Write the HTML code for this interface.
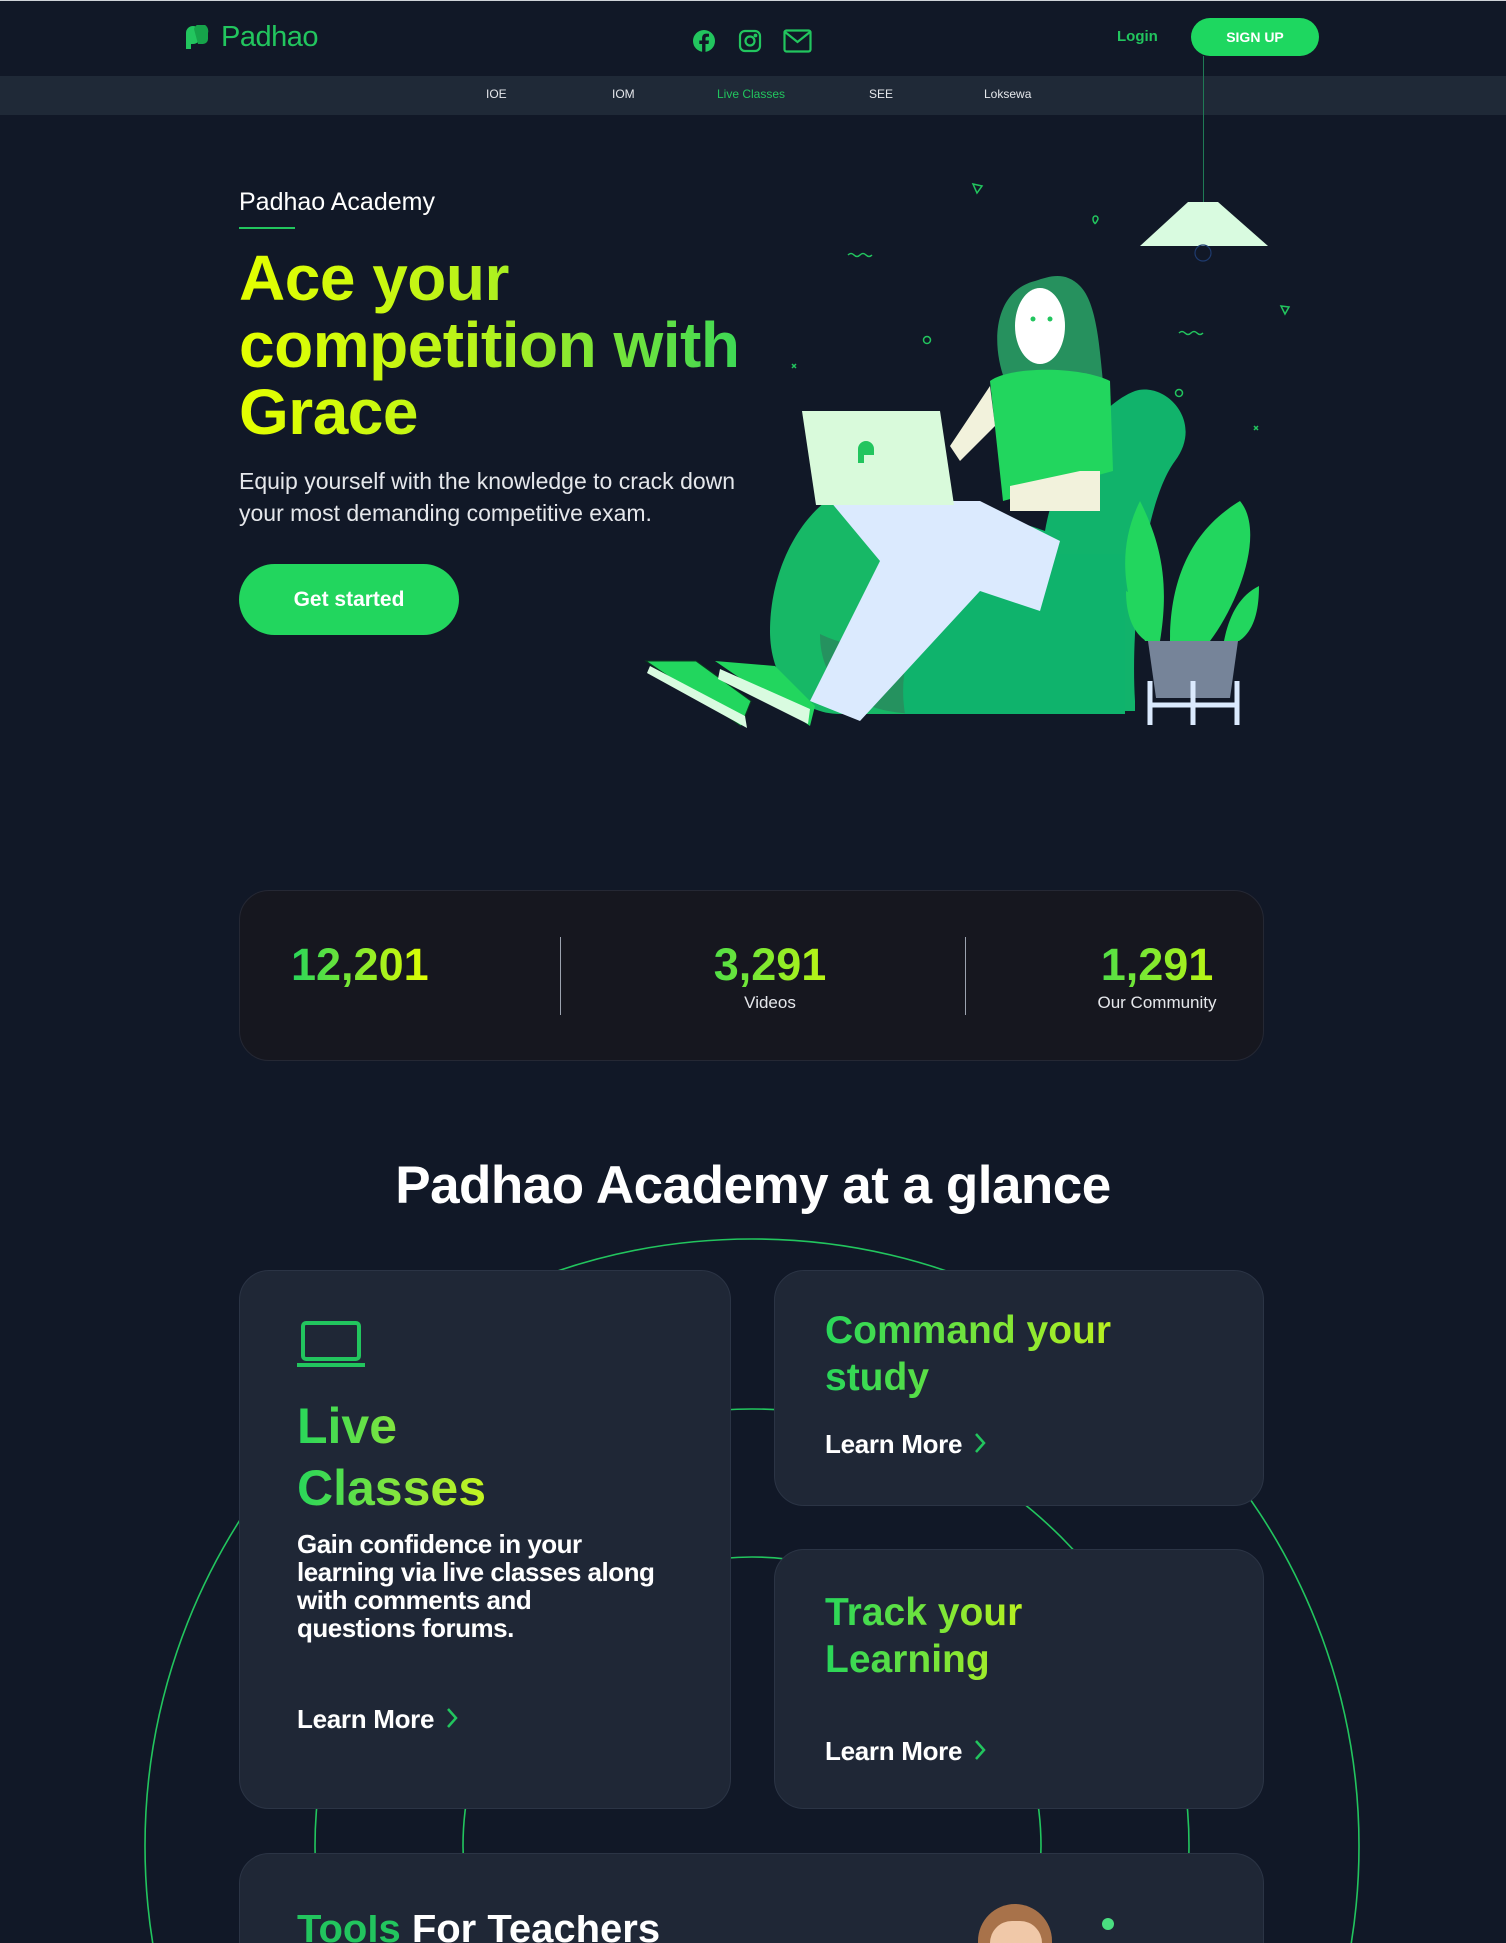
<!DOCTYPE html>
<html><head><meta charset="utf-8">
<style>
*{margin:0;padding:0;box-sizing:border-box}
body{width:1506px;height:1942px;background:#111827;font-family:"Liberation Sans",sans-serif;position:relative;overflow:hidden;border-top:1px solid #cfd3d8}
.abs{position:absolute}
.grad{background-image:linear-gradient(90deg,#28d65a,#e4ff00);-webkit-background-clip:text;background-clip:text;color:transparent}
.g2{background-image:linear-gradient(90deg,#28d65a,#b8f020)}
.card{position:absolute;background:#1f2736;border:1px solid #2b3445;border-radius:30px}
.lm{position:absolute;color:#fff;font-weight:700;font-size:26px;letter-spacing:-0.3px;white-space:nowrap}
.lm svg{margin-left:12px;vertical-align:-1px}
.nav a{position:absolute;top:86px;font-size:12px;color:#e5e7eb}
</style></head><body>
<!-- header -->
<svg class="abs" style="left:184px;top:24px" width="28" height="28" viewBox="0 0 28 28"><path d="M2 24V8a7 7 0 0 1 14 0v4a7 7 0 0 1-7 7H7v5z" fill="#22c55e"/><path d="M10 4a7 7 0 0 1 14 4v6a5 5 0 0 1-5 5h-5" fill="#16a34a"/></svg>
<div class="abs" style="left:221px;top:20px;font-size:29px;color:#22c55e;letter-spacing:-0.5px">Padhao</div>
<svg class="abs" style="left:692px;top:28px" width="24" height="24" viewBox="0 0 24 24"><circle cx="12" cy="12" r="11" fill="#22c55e"/><path d="M13.5 23v-8h3l.5-3.5h-3.5V9.5c0-1 .4-1.7 1.8-1.7H17V4.8a20 20 0 0 0-2.6-.2c-2.6 0-4.3 1.6-4.3 4.5v2.4H7.3V15h2.8v8z" fill="#111827"/></svg>
<svg class="abs" style="left:738px;top:28px" width="24" height="24" viewBox="0 0 24 24" fill="none" stroke="#22c55e" stroke-width="2.2"><rect x="2" y="2" width="20" height="20" rx="5"/><circle cx="12" cy="12" r="4.5"/><circle cx="17.5" cy="6.5" r="0.8" fill="#22c55e"/></svg>
<svg class="abs" style="left:783px;top:28px" width="29" height="24" viewBox="0 0 29 24" fill="none" stroke="#22c55e" stroke-width="2.2"><rect x="1.5" y="1.5" width="26" height="21" rx="2"/><path d="M2 3l12.5 10L27 3"/></svg>
<div class="abs" style="left:1117px;top:27px;font-size:15px;font-weight:700;color:#22c55e">Login</div>
<div class="abs" style="left:1191px;top:17px;width:128px;height:38px;border-radius:19px;background:#1ed760;color:#fff;font-size:14px;font-weight:700;text-align:center;line-height:38px">SIGN UP</div>
<div class="abs" style="left:0;top:75px;width:1506px;height:39px;background:#1f2937"></div>
<div class="nav"><a style="left:486px">IOE</a><a style="left:612px">IOM</a><a style="left:717px;color:#22c55e">Live Classes</a><a style="left:869px">SEE</a><a style="left:984px">Loksewa</a></div>
<div class="abs" style="left:1203px;top:55px;width:1px;height:150px;background:#1f7a55"></div>
<!-- hero -->
<div class="abs" style="left:239px;top:187px;font-size:25px;color:#fff">Padhao Academy</div>
<div class="abs" style="left:239px;top:226px;width:56px;height:2px;background:#22c55e"></div>
<div class="abs" style="left:239px;top:244px;font-size:64px;font-weight:700;line-height:67px;letter-spacing:-0.5px;width:580px;background-image:linear-gradient(90deg,#e4ff00 0%,#b9f31a 40%,#33d65a 90%);-webkit-background-clip:text;background-clip:text;color:transparent">Ace your<br>competition with<br>Grace</div>
<div class="abs" style="left:239px;top:464px;font-size:23px;line-height:32px;color:#e5e7eb">Equip yourself with the knowledge to crack down<br>your most demanding competitive exam.</div>
<div class="abs" style="left:239px;top:563px;width:220px;height:71px;border-radius:36px;background:#22d65e;color:#fff;font-size:21px;font-weight:700;text-align:center;line-height:71px">Get started</div>
<!-- illustration -->
<svg class="abs" style="left:0;top:0" width="1506" height="760">
<g fill="none" stroke="#22c55e" stroke-width="1.5">
<path d="M973 183l9 2-5 7z"/><path d="M1281 305l8 1-4 7z"/><circle cx="927" cy="339" r="3.5"/><circle cx="1179" cy="392" r="3.5"/>
<path d="M848 254q3-3 6 0t6 0 6 0 6 0"/><path d="M1179 332q3-3 6 0t6 0 6 0 6 0"/><path d="M1093 218c0-4 5-4 5 0-1 3-3 4-2.5 5-1-1-2.5-2-2.5-5z"/>
<path d="M792 363l4 4m0-4l-4 4M1254 425l4 4m0-4l-4 4"/></g>
<path d="M1140 245l48-44h30l50 44z" fill="#d9fbe0"/>
<circle cx="1203" cy="252" r="8" fill="none" stroke="#1e3a6e" stroke-width="1.2"/>
<path d="M1135 700c-5-80 10-200 40-240 30-40-10-80-40-70-40 15-80 80-90 140-100-40-130 50-130 120 0 30 30 60 70 60h150z" fill="#11b36b"/>
<path d="M870 480c-60 10-100 80-100 150 0 50 30 83 70 83h120l-30-100z" fill="#17b866"/>
<path d="M920 713c-50 0-100-20-100-80 40 20 80 10 100 0z" fill="#25925f"/>
<path d="M905 713c-10-60 20-130 90-160l130 0 0 160z" fill="#0fb36c"/>
<path d="M1035 280c-40 10-45 60-30 100 10 25 70 20 100 15-5-30-5-90-25-110-15-15-30-10-45-5z" fill="#26915e"/>
<ellipse cx="1040" cy="325" rx="25" ry="38" fill="#fff"/>
<circle cx="1033" cy="318" r="2.5" fill="#22c55e"/><circle cx="1050" cy="318" r="2.5" fill="#22c55e"/>
<path d="M990 380c20-15 90-15 120 0l3 90-110 30z" fill="#22d65e"/>
<path d="M990 385l-40 60 10 15 35-35zM1080 470l20 0 0 40-90 0 0-25z" fill="#f2f2dc"/>
<path d="M830 500l150 0 80 40-20 70-60 -20-120 130-50-20 70-140-50-60z" fill="#dbeafe"/>
<path d="M802 410l138 0 14 94-138 0z" fill="#d9fadb"/>
<path d="M858 448a8 8 0 0 1 16 0v6h-10v8h-6z" fill="#22c55e"/>
<path d="M646 660l50 0 55 40-10 25z" fill="#22d65e" stroke="#0b3d20"/>
<path d="M650 665l95 50 2 12-100-55z" fill="#d9fbe0"/>
<path d="M715 660l60 5 40 40-5 20z" fill="#22d65e"/>
<path d="M720 668l90 40-2 15-90-45z" fill="#d9fbe0"/>
<path d="M1145 640c-20-40-30-90-5-140 20 40 30 80 20 140zM1170 640c0-60 20-110 70-140 25 30 0 100-30 140zM1126 590c20 10 30 30 30 50h-10c-15-10-20-30-20-50zM1259 585c-20 10-30 30-35 55h15c15-10 20-30 20-55z" fill="#22d65e"/>
<path d="M1148 640h90l-8 57h-74z" fill="#768499"/>
<g stroke="#dbeafe" stroke-width="5"><path d="M1150 680v44M1237 680v44M1193 680v44M1150 704h87"/></g>
</svg>
<!-- stats -->
<div class="abs" style="left:239px;top:889px;width:1025px;height:171px;border-radius:30px;background:#16171f;border:1px solid #252834"></div>
<div class="abs grad" style="left:291px;top:938px;font-size:45px;font-weight:700">12,201</div>
<div class="abs grad" style="left:670px;width:200px;text-align:center;top:938px;font-size:45px;font-weight:700">3,291</div>
<div class="abs" style="left:670px;width:200px;text-align:center;top:992px;font-size:17px;color:#e5e7eb">Videos</div>
<div class="abs grad" style="left:1057px;width:200px;text-align:center;top:938px;font-size:45px;font-weight:700">1,291</div>
<div class="abs" style="left:1057px;width:200px;text-align:center;top:992px;font-size:17px;color:#e5e7eb">Our Community</div>
<div class="abs" style="left:560px;top:936px;width:1px;height:78px;background:#9ca3af"></div>
<div class="abs" style="left:965px;top:936px;width:1px;height:78px;background:#9ca3af"></div>
<div class="abs" style="left:0;width:1506px;text-align:center;top:1154px;font-size:53px;font-weight:700;color:#fff;letter-spacing:-0.5px">Padhao Academy at a glance</div>
<svg class="abs" style="left:0;top:0" width="1506" height="1942"><g fill="none" stroke="#22c55e" stroke-width="1.6"><circle cx="752" cy="1845" r="607"/><circle cx="752" cy="1845" r="437"/><circle cx="752" cy="1845" r="289"/></g></svg>
<!-- cards -->
<div class="card" style="left:239px;top:1269px;width:492px;height:539px"></div>
<svg class="abs" style="left:297px;top:1319px" width="68" height="48" viewBox="0 0 68 48" fill="none" stroke="#22c55e" stroke-width="4"><rect x="6" y="3" width="56" height="36" rx="3"/><path d="M0 45h68"/></svg>
<div class="abs grad" style="left:297px;top:1394px;font-size:50px;font-weight:700;line-height:62px;background-image:linear-gradient(90deg,#28d65a,#8fe83a 60%,#c5f520 100%)">Live<br>Classes</div>
<div class="abs" style="left:297px;top:1529px;font-size:26px;font-weight:700;line-height:28px;color:#fff;letter-spacing:-0.5px">Gain confidence in your<br>learning via live classes along<br>with comments and<br>questions forums.</div>
<div class="lm" style="left:297px;top:1703px">Learn More<svg width="12" height="22" viewBox="0 0 12 22" fill="none" stroke="#22c55e" stroke-width="2.5"><path d="M2 2l8 9-8 9"/></svg></div>
<div class="card" style="left:774px;top:1269px;width:490px;height:236px"></div>
<div class="abs grad g2" style="left:825px;top:1306px;font-size:39px;font-weight:700;line-height:47px">Command your<br>study</div>
<div class="lm" style="left:825px;top:1428px">Learn More<svg width="12" height="22" viewBox="0 0 12 22" fill="none" stroke="#22c55e" stroke-width="2.5"><path d="M2 2l8 9-8 9"/></svg></div>
<div class="card" style="left:774px;top:1548px;width:490px;height:260px"></div>
<div class="abs grad g2" style="left:825px;top:1588px;font-size:39px;font-weight:700;line-height:47px">Track your<br>Learning</div>
<div class="lm" style="left:825px;top:1735px">Learn More<svg width="12" height="22" viewBox="0 0 12 22" fill="none" stroke="#22c55e" stroke-width="2.5"><path d="M2 2l8 9-8 9"/></svg></div>
<div class="card" style="left:239px;top:1852px;width:1025px;height:90px;border-bottom:none;border-radius:30px 30px 0 0"></div>
<div class="abs" style="left:297px;top:1914px;font-size:40px;font-weight:700;color:#fff;line-height:28px;height:28px;overflow:hidden;padding-top:0"><span style="color:#22c55e">Tools</span> For Teachers</div>
<div class="abs" style="left:978px;top:1903px;width:74px;height:39px;border-radius:37px 37px 0 0;background:#a8724a"></div>
<div class="abs" style="left:990px;top:1920px;width:52px;height:22px;border-radius:26px 26px 0 0;background:#f0c8a8"></div>
<div class="abs" style="left:1102px;top:1917px;width:12px;height:12px;border-radius:6px;background:#4ade80"></div>
</body></html>
